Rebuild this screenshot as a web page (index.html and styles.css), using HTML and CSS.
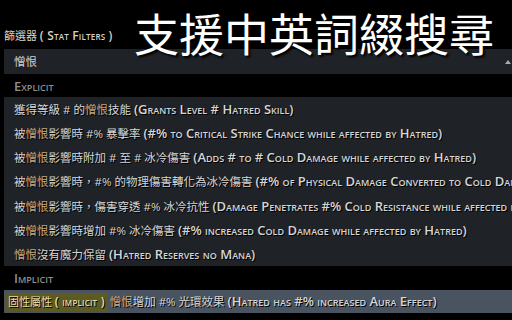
FILE: index.html
```html
<!DOCTYPE html>
<html lang="zh-Hant">
<head>
<meta charset="utf-8">
<link rel="stylesheet" href="styles.css">
</head>
<body>
<div class="page">
  <div class="top">
    <div class="label">篩選器 <span class="sc">( Stat Filters )</span></div>
    <div class="title">支援中英詞綴搜尋</div>
  </div>
  <div class="search">憎恨<span class="caret"></span></div>
  <div class="group">Explicit</div>
  <ul class="list">
    <li>獲得等級 # 的<span class="hl">憎恨</span>技能 <span class="sc">(Grants Level # Hatred Skill)</span></li>
    <li>被<span class="hl">憎恨</span>影響時 #% 暴擊率 <span class="sc">(#% to Critical Strike Chance while affected by Hatred)</span></li>
    <li>被<span class="hl">憎恨</span>影響時附加 # 至 # 冰冷傷害 <span class="sc">(Adds # to # Cold Damage while affected by Hatred)</span></li>
    <li>被<span class="hl">憎恨</span>影響時，#% 的物理傷害轉化為冰冷傷害 <span class="sc">(#% of Physical Damage Converted to Cold Damage while affected by Hatred)</span></li>
    <li>被<span class="hl">憎恨</span>影響時，傷害穿透 #% 冰冷抗性 <span class="sc">(Damage Penetrates #% Cold Resistance while affected by Hatred)</span></li>
    <li>被<span class="hl">憎恨</span>影響時增加 #% 冰冷傷害 <span class="sc">(#% increased Cold Damage while affected by Hatred)</span></li>
    <li><span class="hl">憎恨</span>沒有魔力保留 <span class="sc">(Hatred Reserves no Mana)</span></li>
  </ul>
  <div class="group group-b">Implicit</div>
  <div class="row-active"><span class="tag">固性屬性 <span class="sc">( implicit )</span></span> <span class="hl">憎恨</span>增加 #% 光環效果 <span class="sc">(Hatred has #% increased Aura Effect)</span></div>
</div>
</body>
</html>
```
FILE: styles.css
```css
html, body {
  margin: 0;
  padding: 0;
  background: #000;
  width: 512px;
  height: 320px;
  overflow: hidden;
}
body {
  font-family: "Open Sans", "Noto Sans CJK TC", sans-serif;
  font-size: 11.5px;
  color: #d6d6d6;
}
.page {
  padding-left: 4px;
  white-space: nowrap;
  overflow: hidden;
}
.sc {
  font-variant: small-caps;
  font-weight: 600;
  font-size: 13px;
  letter-spacing: 0;
}
.top {
  position: relative;
  height: 49px;
}
.label {
  position: absolute;
  left: 0;
  top: 27px;
  color: #d8d2c4;
  font-size: 11px;
  text-shadow: 1px 1px 0 #000;
}
.label .sc,
.tag .sc {
  font-size: 12px;
  letter-spacing: 0.2px;
}
.title {
  position: absolute;
  left: 130px;
  top: 5px;
  font-family: "Noto Sans CJK TC", sans-serif;
  font-size: 45px;
  line-height: 56px;
  color: #fff;
  z-index: 2;
  text-shadow: 2px 2px 2px #000;
}
.search {
  position: relative;
  height: 25px;
  line-height: 25px;
  background: #1f2226;
  padding-left: 10px;
  color: #cfcfcf;
}
.caret {
  position: absolute;
  right: 1px;
  top: 11px;
  border-left: 3px solid transparent;
  border-right: 3px solid transparent;
  border-bottom: 4px solid #aaa;
}
.group {
  height: 23px;
  line-height: 25px;
  padding-left: 10px;
  color: #8d8f92;
  font-variant: small-caps;
  font-weight: 600;
  font-size: 13px;
}
.group-b {
  height: 24px;
}
.list {
  list-style: none;
  margin: 0;
  padding: 0;
  background: #1f2226;
}
.list li {
  height: 24.15px;
  line-height: 25px;
  padding-left: 10px;
  text-shadow: 1px 1px 0 #000;
}
.hl {
  color: #c9a77c;
}
.row-active {
  height: 23px;
  line-height: 23px;
  background: #4a5360;
  padding-left: 2px;
  text-shadow: 1px 1px 0 #000;
}
.tag {
  display: inline-block;
  background: #5e5a21;
  color: #e0dcb0;
  font-size: 11px;
  padding: 0 2px;
  height: 18px;
  line-height: 18px;
}
```
